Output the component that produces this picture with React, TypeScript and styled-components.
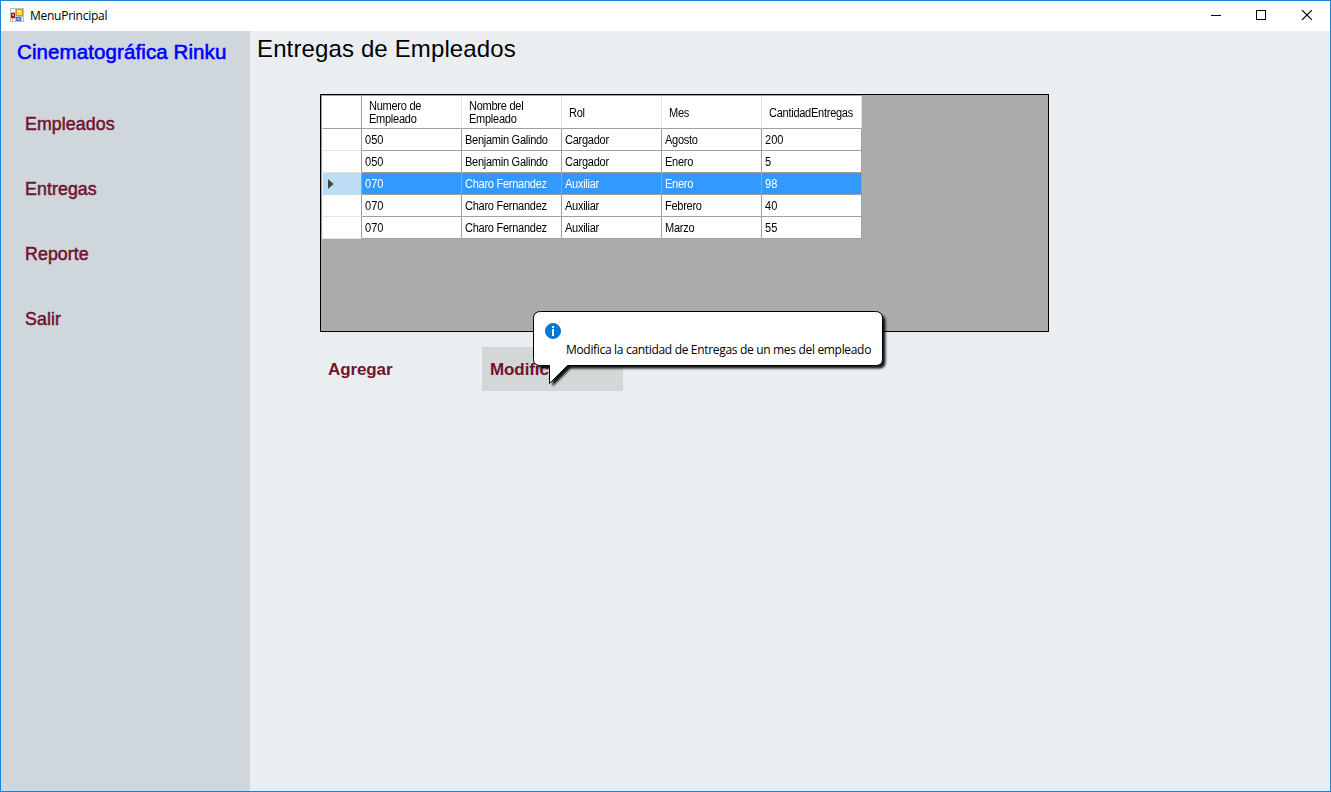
import React from "react";
import styled, { createGlobalStyle } from "styled-components";

const Global = createGlobalStyle`
  *, *::before, *::after { box-sizing: border-box; }
  html, body, #root { margin: 0; height: 100%; }
  body { overflow: hidden; font-family: "Liberation Sans", Arial, sans-serif; }
`;

const Window = styled.div`
  display: flex;
  flex-direction: column;
  width: 1331px;
  height: 792px;
  border: 1px solid #1883d7;
  background: #ebeef1;
`;

const TitleBar = styled.header`
  display: flex;
  align-items: center;
  height: 30px;
  flex: none;
  padding-left: 9px;
  background: #fff;
  color: #000;
`;

const LogoSlot = styled.div`
  display: flex;
  padding-bottom: 2px;
`;

const AppTitle = styled.span`
  flex: 1;
  margin-left: 6px;
  font: 12px/16px "Open Sans", "Noto Sans", sans-serif;
  letter-spacing: -0.26px;
`;

const CaptionButtons = styled.div`
  display: flex;
  gap: 35px;
  padding: 0 18px 2px 0;
`;

const Body = styled.div`
  display: flex;
  flex: 1;
  min-height: 0;
`;

const Sidebar = styled.nav`
  width: 249px;
  flex: none;
  padding-top: 9px;
  background: #cfd7dd;
`;

const Brand = styled.h1`
  margin: 0 0 40px;
  padding-left: 16px;
  color: #0000ff;
  font-size: 20.5px;
  line-height: 24px;
  font-weight: 400;
  letter-spacing: 0.1px;
  white-space: nowrap;
  -webkit-text-stroke: 0.6px #0000ff;
`;

const MenuItem = styled.div`
  height: 44px;
  margin-bottom: 21px;
  padding-left: 24px;
  color: #72132e;
  font-size: 17.8px;
  line-height: 41px;
  letter-spacing: 0.08px;
  -webkit-text-stroke: 0.5px #72132e;
`;

const Main = styled.main`
  flex: 1;
  min-width: 0;
`;

const PageTitle = styled.h2`
  margin: 0;
  padding: 5px 0 0 7px;
  height: 63px;
  font-size: 24px;
  line-height: 26px;
  font-weight: 400;
  letter-spacing: 0.13px;
`;

const GridPanel = styled.div`
  width: 729px;
  height: 238px;
  margin-left: 70px;
  border: 1px solid #000;
  background: #ababab;
`;

const Table = styled.div`
  width: 541px;
  border-top: 1px solid #a0a0a0;
  border-left: 1px solid #a0a0a0;
  font-size: 12px;
`;

const Row = styled.div<{ $header?: boolean; $selected?: boolean }>`
  display: grid;
  grid-template-columns: 40px repeat(5, 100px);
  grid-template-rows: 100%;
  height: ${(p) => (p.$header ? 33 : 22)}px;
  background: ${(p) => (p.$selected ? "#3399ff" : "#fff")};
  color: ${(p) => (p.$selected ? "#fff" : "#000")};
`;

const RowHeader = styled.div<{ $header?: boolean; $selected?: boolean }>`
  display: flex;
  align-items: center;
  padding-left: 5px;
  border-left: 1px solid ${(p) => (p.$header ? "#fff" : "#f3f3f3")};
  border-right: 1px solid #a0a0a0;
  border-bottom: 1px solid ${(p) => (p.$header ? "#a0a0a0" : p.$selected ? "#bcdcf4" : "#e5e5e5")};
  background: ${(p) => (p.$selected ? "#bcdcf4" : "#fff")};
`;

const HeaderCell = styled.div`
  display: flex;
  align-items: center;
  padding: 2px 0 0 7px;
  border-right: 1px solid #e5e5e5;
  border-bottom: 1px solid #a0a0a0;
  line-height: 13px;
  white-space: pre;
`;

const Cell = styled.div`
  padding: 2px 0 0 3px;
  border-right: 1px solid #a0a0a0;
  border-bottom: 1px solid #a0a0a0;
  line-height: 19px;
  white-space: nowrap;
`;

const Condensed = styled.span<{ $numeric?: boolean }>`
  display: inline-block;
  letter-spacing: ${(p) => (p.$numeric ? 0 : -0.3)}px;
  transform: scaleX(0.92);
  transform-origin: left center;
`;

const Actions = styled.div`
  display: flex;
  gap: 21px;
  margin: 15px 0 0 70px;
`;

const ActionButton = styled.div<{ $hover?: boolean }>`
  position: relative;
  width: 141px;
  height: 44px;
  padding: 1px 0 0 8px;
  background: ${(p) => (p.$hover ? "#d3d7d8" : "transparent")};
  color: #72132e;
  font-size: 17px;
  line-height: 44px;
  font-weight: 700;
  letter-spacing: -0.1px;
`;

const Balloon = styled.div`
  position: absolute;
  left: 51px;
  top: -36px;
  width: 356px;
  height: 84px;
`;

const BalloonShape = styled.svg`
  position: absolute;
  inset: 0;
  overflow: visible;
`;

const BalloonText = styled.p`
  position: absolute;
  left: 33px;
  top: 31px;
  margin: 0;
  color: #000;
  font: 12px/16px "Open Sans", "Noto Sans", sans-serif;
  letter-spacing: -0.32px;
  white-space: nowrap;
`;

const headers = ["Numero de\nEmpleado", "Nombre del\nEmpleado", "Rol", "Mes", "CantidadEntregas"];
const rows = [
  ["050", "Benjamin Galindo", "Cargador", "Agosto", "200"],
  ["050", "Benjamin Galindo", "Cargador", "Enero", "5"],
  ["070", "Charo Fernandez", "Auxiliar", "Enero", "98"],
  ["070", "Charo Fernandez", "Auxiliar", "Febrero", "40"],
  ["070", "Charo Fernandez", "Auxiliar", "Marzo", "55"],
];
const selectedRow = 2;

const AppIcon = () => (
  <svg width="14" height="14" viewBox="0 0 14 14" shapeRendering="crispEdges">
    <path d="M0 0h14v14H0z" fill="#bdbdbd" />
    <path d="M1 1h4v3H1zM1 11h1v2h-1zM3 11h2v2h-2zM12 9h1v4h-1z" fill="#fff" />
    <path d="M1 5h4v5H1z" fill="#a3170c" />
    <path d="M2 6h2v2H2z" fill="#e58a78" />
    <path d="M6 1h7v7H6z" fill="#d09a10" />
    <path d="M7 2h5v5H7z" fill="#ffd657" />
    <path d="M7 2h3v2H7z" fill="#ffeeb0" />
    <path d="M6 9h5v4H6z" fill="#3a74cf" />
    <path d="M7 10h3v2H7z" fill="#7db0f2" />
  </svg>
);

const outline =
  "M7.5 .5H342.5Q349.5 .5 349.5 7.5V48.5Q349.5 54.5 342.5 54.5H34.5L16.5 72.5V54.5H7.5Q.5 54.5 .5 48.5V7.5Q.5 .5 7.5 .5Z";

export default function App() {
  return (
    <>
      <Global />
      <Window>
        <TitleBar>
          <LogoSlot>
            <AppIcon />
          </LogoSlot>
          <AppTitle>MenuPrincipal</AppTitle>
          <CaptionButtons>
            <svg width="10" height="10" shapeRendering="crispEdges">
              <path d="M0 5.5h10" stroke="#000" />
            </svg>
            <svg width="10" height="10" shapeRendering="crispEdges">
              <path d="M.5 .5h9v9h-9z" fill="none" stroke="#000" />
            </svg>
            <svg width="11" height="10">
              <path d="M1 0l10 10M11 0L1 10" stroke="#000" strokeWidth="1.1" />
            </svg>
          </CaptionButtons>
        </TitleBar>
        <Body>
          <Sidebar>
            <Brand>Cinematográfica Rinku</Brand>
            {["Empleados", "Entregas", "Reporte", "Salir"].map((m) => (
              <MenuItem key={m}>{m}</MenuItem>
            ))}
          </Sidebar>
          <Main>
            <PageTitle>Entregas de Empleados</PageTitle>
            <GridPanel>
              <Table>
                <Row $header>
                  <RowHeader $header />
                  {headers.map((h) => (
                    <HeaderCell key={h}>
                      <Condensed>{h}</Condensed>
                    </HeaderCell>
                  ))}
                </Row>
                {rows.map((r, i) => (
                  <Row key={i} $selected={i === selectedRow}>
                    <RowHeader $selected={i === selectedRow}>
                      {i === selectedRow && (
                        <svg width="6" height="10">
                          <path d="M0 0L5.5 5 0 10z" fill="#404040" />
                        </svg>
                      )}
                    </RowHeader>
                    {r.map((c, j) => (
                      <Cell key={j}>
                        <Condensed $numeric={/^\d+$/.test(c)}>{c}</Condensed>
                      </Cell>
                    ))}
                  </Row>
                ))}
              </Table>
            </GridPanel>
            <Actions>
              <ActionButton>Agregar</ActionButton>
              <ActionButton $hover>
                Modificar
                <Balloon>
                  <BalloonShape width="356" height="84">
                    <defs>
                      <filter id="soft" x="-5%" y="-20%" width="110%" height="150%">
                        <feGaussianBlur stdDeviation="1" />
                      </filter>
                    </defs>
                    <path d={outline} transform="translate(3 3)" fill="#000" opacity="0.9" filter="url(#soft)" />
                    <path d={outline} fill="#fff" stroke="#000" />
                    <circle cx="20" cy="20" r="7.6" fill="#0078d7" stroke="#0a63ad" strokeWidth="0.8" />
                    <path d="M19 15h2v2h-2zM19 18h2v7h-2z" fill="#fff" />
                  </BalloonShape>
                  <BalloonText>Modifica la cantidad de Entregas de un mes del empleado</BalloonText>
                </Balloon>
              </ActionButton>
            </Actions>
          </Main>
        </Body>
      </Window>
    </>
  );
}
